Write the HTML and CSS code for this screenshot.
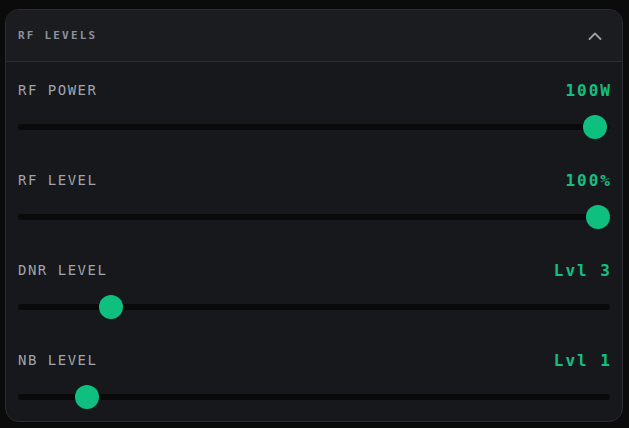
FILE: index.html
```html
<!DOCTYPE html>
<html lang="en">
<head>
<meta charset="utf-8">
<title>RF Levels</title>
<link rel="stylesheet" href="styles.css">
</head>
<body>
<section class="card">
  <header class="card-head">
    <h2 class="title">RF LEVELS</h2>
    <svg class="chevron" width="14" height="8" viewBox="0 0 14 8" aria-hidden="true">
      <path d="M1.5 7 L7 1.5 L12.5 7" fill="none" stroke="#9a9ea6" stroke-width="1.8" stroke-linecap="round" stroke-linejoin="round"/>
    </svg>
  </header>
  <div class="card-body">
    <div class="ctrl">
      <div class="ctrl-top"><span class="label">RF POWER</span><span class="value">100W</span></div>
      <div class="slider"><div class="track"></div><div class="thumb" style="--p:0.9947"></div></div>
    </div>
    <div class="ctrl">
      <div class="ctrl-top"><span class="label">RF LEVEL</span><span class="value">100%</span></div>
      <div class="slider"><div class="track"></div><div class="thumb" style="--p:1"></div></div>
    </div>
    <div class="ctrl">
      <div class="ctrl-top"><span class="label">DNR LEVEL</span><span class="value">Lvl 3</span></div>
      <div class="slider"><div class="track"></div><div class="thumb" style="--p:0.1426"></div></div>
    </div>
    <div class="ctrl">
      <div class="ctrl-top"><span class="label">NB LEVEL</span><span class="value">Lvl 1</span></div>
      <div class="slider"><div class="track"></div><div class="thumb" style="--p:0.1004"></div></div>
    </div>
  </div>
</section>
</body>
</html>
```
FILE: styles.css
```css
* { box-sizing: border-box; }
html, body { margin: 0; }
body {
  background: #0b0b0c;
  padding: 9px 6px 6px 5px;
  font-family: "DejaVu Sans Mono", "Liberation Mono", monospace;
}
.card {
  width: 618px;
  background: #17181c;
  border: 1px solid #2c2d32;
  border-radius: 14px;
  overflow: hidden;
}
.card-head {
  height: 52px;
  display: flex;
  align-items: center;
  justify-content: space-between;
  padding: 0 20px 0 12px;
  background: #1b1c20;
  border-bottom: 1px solid #2c2d32;
}
.title {
  margin: 0;
  font-size: 11px;
  font-weight: bold;
  letter-spacing: 2.2px;
  color: #8b929c;
}
.chevron { display: block; }
.card-body {
  display: flex;
  flex-direction: column;
  gap: 31px;
  padding: 18px 12px 12px 12px;
}
.ctrl {
  display: flex;
  flex-direction: column;
  gap: 15px;
}
.ctrl-top {
  display: flex;
  align-items: center;
  justify-content: space-between;
  height: 20px;
}
.label {
  font-size: 14px;
  letter-spacing: 1.5px;
  color: #a0a4ab;
}
.value {
  font-size: 16px;
  font-weight: bold;
  letter-spacing: 2px;
  margin-right: -2px;
  color: #12c182;
}
.slider {
  position: relative;
  height: 24px;
  display: flex;
  align-items: center;
}
.track {
  flex: 1;
  height: 6px;
  border-radius: 3px;
  background: #0a0a0b;
}
.thumb {
  position: absolute;
  top: 0;
  left: calc((100% - 24px) * var(--p));
  width: 24px;
  height: 24px;
  border-radius: 50%;
  background: #0fbf80;
}
```
